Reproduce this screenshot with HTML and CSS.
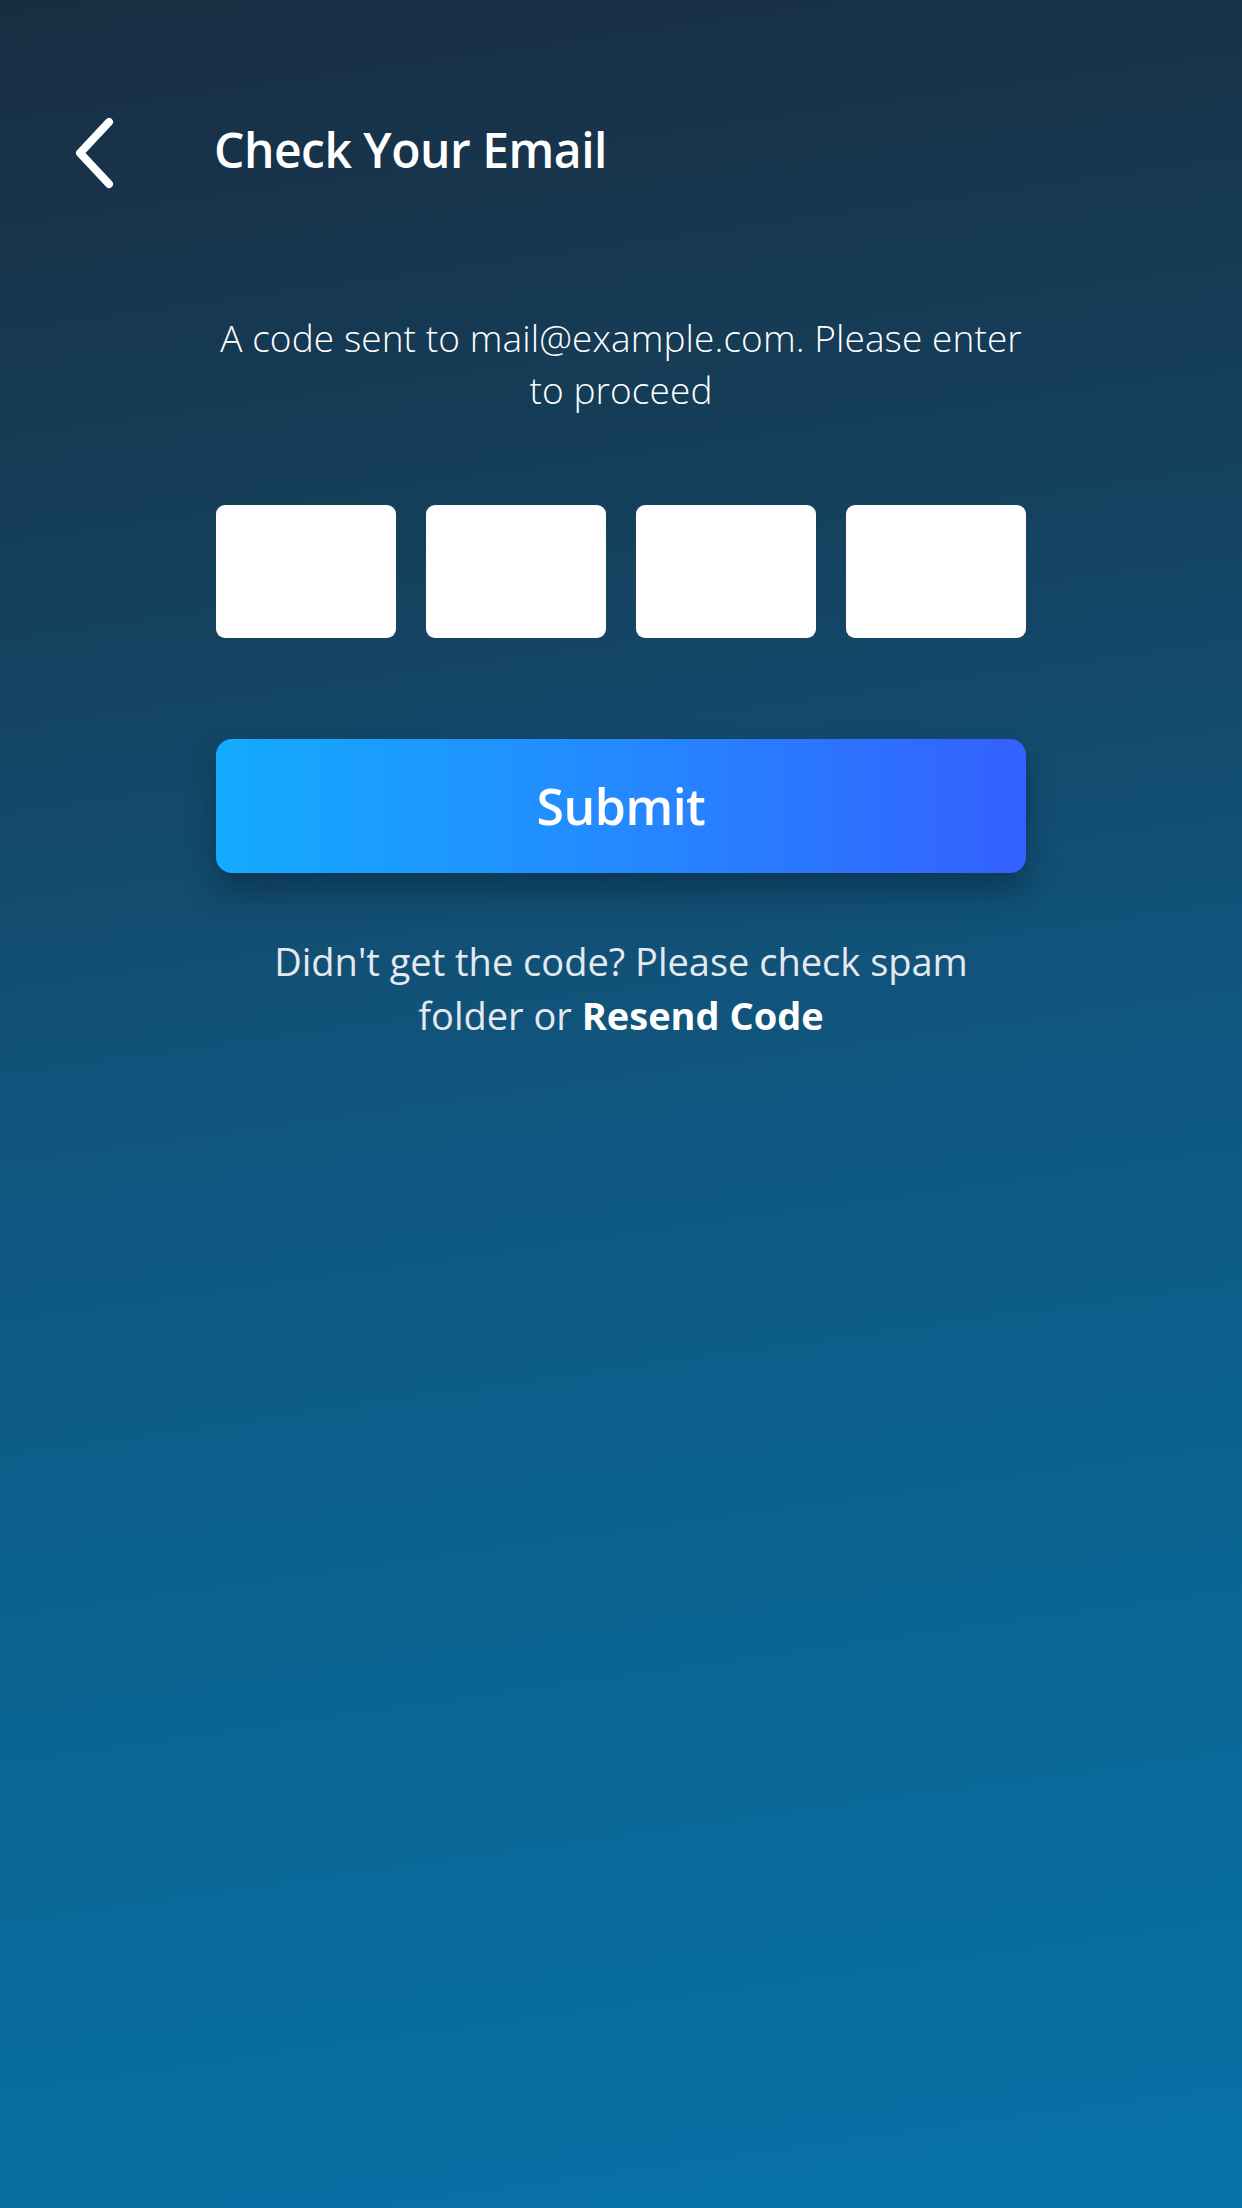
FILE: index.html
```html
<!DOCTYPE html>
<html lang="en">
<head>
<meta charset="utf-8">
<title>Check Your Email</title>
<link rel="stylesheet" href="styles.css">
</head>
<body>
<div class="screen">
  <header class="header">
    <button class="back" aria-label="Back">
      <svg width="44" height="72" viewBox="0 0 44 72" fill="none">
        <path d="M37 5 L8 36 L37 67" stroke="#fff" stroke-width="8" stroke-linecap="round" stroke-linejoin="round"/>
      </svg>
    </button>
    <h1 class="title">Check Your Email</h1>
  </header>
  <main class="content">
    <p class="subtitle">A code sent to mail@example.com. Please enter to proceed</p>
    <div class="code-row">
      <input class="code-box" type="text" maxlength="1">
      <input class="code-box" type="text" maxlength="1">
      <input class="code-box" type="text" maxlength="1">
      <input class="code-box" type="text" maxlength="1">
    </div>
    <button class="submit">Submit</button>
    <p class="hint"><span class="hint-text">Didn't get the code? Please check spam folder or</span> <a class="resend" href="#">Resend Code</a></p>
  </main>
</div>
</body>
</html>
```
FILE: styles.css
```css
* { box-sizing: border-box; }
html, body { margin: 0; padding: 0; }
body {
  width: 1242px;
  height: 2208px;
  font-family: "Open Sans", "Noto Sans", sans-serif;
  color: #fff;
  overflow: hidden;
}
.screen {
  width: 1242px;
  height: 2208px;
  background: linear-gradient(172deg, #182d42 0%, #15405c 25%, #105780 50%, #0a6695 75%, #0772a8 100%);
}
.header {
  display: flex;
  align-items: center;
  padding: 116px 0 0 72px;
  height: 190px;
}
.back {
  background: none;
  border: 0;
  padding: 0;
  width: 44px;
  height: 72px;
  display: flex;
  cursor: pointer;
}
.title {
  margin: 0 0 6px 98px;
  font-size: 48px;
  font-weight: 600;
  line-height: 1;
  letter-spacing: -0.5px;
}
.content {
  width: 810px;
  margin: 0 auto;
}
.subtitle {
  margin: 122px 0 0;
  text-align: center;
  font-size: 37px;
  font-weight: 300;
  line-height: 52px;
  letter-spacing: 0.1px;
}
.code-row {
  display: grid;
  grid-template-columns: repeat(4, 180px);
  gap: 30px;
  margin-top: 89px;
}
.code-box {
  height: 133px;
  border: 0;
  border-radius: 9px;
  background: #fff;
  outline: none;
  font-size: 48px;
  text-align: center;
}
.submit {
  display: block;
  width: 100%;
  height: 134px;
  margin-top: 101px;
  border: 0;
  border-radius: 16px;
  background: linear-gradient(90deg, #14abff 0%, #2489ff 50%, #3460ff 100%);
  box-shadow: 0 18px 30px rgba(6, 30, 50, 0.45);
  color: #fff;
  font-family: inherit;
  font-size: 50px;
  font-weight: 600;
  letter-spacing: -0.5px;
  cursor: pointer;
}
.hint {
  max-width: 730px;
  margin: 61px auto 0;
  text-align: center;
  font-size: 38px;
  line-height: 54px;
  color: #e3e9ee;
}
.resend {
  color: #fff;
  font-weight: 700;
  text-decoration: none;
}
```
